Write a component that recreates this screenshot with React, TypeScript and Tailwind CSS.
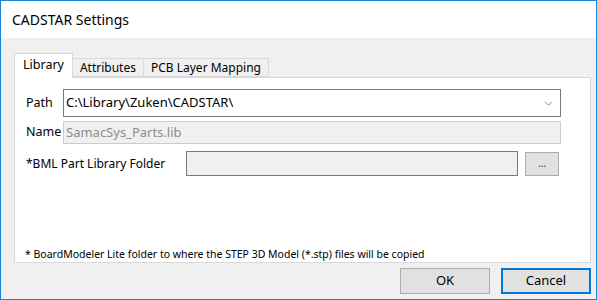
import { ChevronDown } from "lucide-react";

const font = { fontFamily: "'Noto Sans', 'Open Sans', sans-serif" };

function Tab({ label, active }: { label: string; active?: boolean }) {
  if (active) {
    return (
      <div className="h-[25px] px-[8px] pt-[2px] bg-white border border-b-0 border-[#d9d9d9] -mb-px relative z-10 text-[12.5px] text-black">
        {label}
      </div>
    );
  }
  return (
    <div className="h-[19px] px-[7px] bg-[#f0f0f0] border border-l-0 border-[#d9d9d9] text-[12px] leading-[17px] text-black">
      {label}
    </div>
  );
}

function WinButton({ label, focused }: { label: string; focused?: boolean }) {
  return (
    <button
      className={
        focused
          ? "w-[90px] h-[26px] bg-[#e1e1e1] border-2 border-[#0078d7] text-[13px] text-black"
          : "w-[90px] h-[26px] bg-[#e1e1e1] border border-[#adadad] text-[13px] text-black"
      }
    >
      {label}
    </button>
  );
}

export default function App() {
  return (
    <div
      className="w-[597px] h-[300px] border border-[#1883d7] flex flex-col bg-[#f0f0f0] overflow-hidden"
      style={font}
    >
      <div className="h-[37px] bg-white pl-[11px] pt-[8px] text-[14px] text-black">
        CADSTAR Settings
      </div>
      <div className="flex-1 flex flex-col pl-[13px] pr-[5px] pt-[15px]">
        <div className="flex items-end">
          <Tab label="Library" active />
          <Tab label="Attributes" />
          <Tab label="PCB Layer Mapping" />
        </div>
        <div className="h-[186px] bg-white border border-[#d9d9d9] flex flex-col pl-[11px] pr-[29px] pt-[11px] text-[12.5px] text-black">
          <div className="flex items-center">
            <span className="w-[37px]">Path</span>
            <div className="flex-1 h-[28px] border border-[#7a7a7a] bg-white flex items-center pl-[2px] pr-[5px]">
              <span className="flex-1 text-[13px]">C:\Library\Zuken\CADSTAR\</span>
              <ChevronDown size={13} strokeWidth={1.25} className="text-[#555]" />
            </div>
          </div>
          <div className="flex items-center mt-[4px]">
            <span className="w-[37px]">Name</span>
            <div className="flex-1 h-[23px] border border-[#cccccc] bg-[#f0f0f0] flex items-center pl-[2px] text-[13px] text-[#8c8c8c]">
              SamacSys_Parts.lib
            </div>
          </div>
          <div className="flex items-center mt-[7px] pr-[2px]">
            <span className="w-[160px] text-[12px]">*BML Part Library Folder</span>
            <div className="flex-1 h-[25px] border border-[#7a7a7a] bg-[#f0f0f0]" />
            <div className="ml-[7px] w-[34px] h-[24px] border border-[#adadad] bg-[#e1e1e1] flex items-center justify-center text-[10px] text-[#333]">
              ...
            </div>
          </div>
          <div className="flex-1" />
          <div className="text-[10.5px] leading-[14px] text-black -ml-[1px] mb-[1px]">
            * BoardModeler Lite folder to where the STEP 3D Model (*.stp) files will be copied
          </div>
        </div>
        <div className="flex justify-end gap-[11px] mt-[5px]">
          <WinButton label="OK" />
          <WinButton label="Cancel" focused />
        </div>
      </div>
    </div>
  );
}
